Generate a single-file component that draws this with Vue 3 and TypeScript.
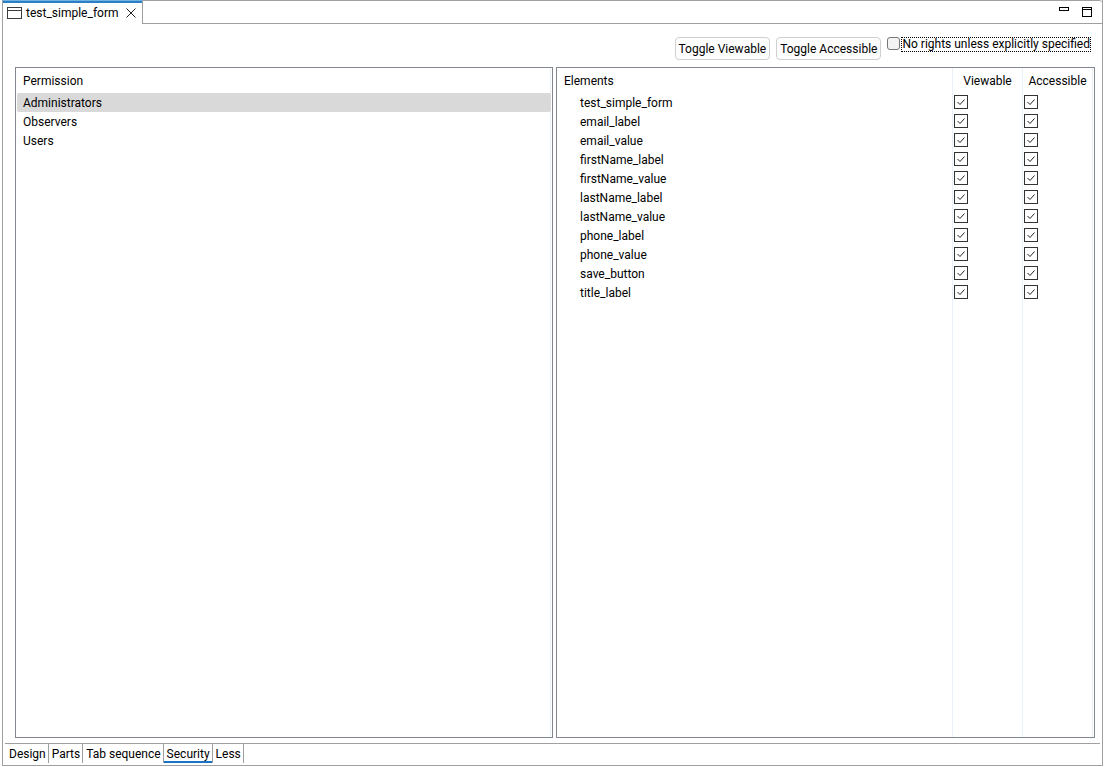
<script setup lang="ts">
import { ref } from 'vue'

interface ElementRow {
  name: string
  viewable: boolean
  accessible: boolean
}

const permissions = ['Administrators', 'Observers', 'Users']
const selected = ref('Administrators')

const elements = ref<ElementRow[]>(
  [
    'test_simple_form',
    'email_label',
    'email_value',
    'firstName_label',
    'firstName_value',
    'lastName_label',
    'lastName_value',
    'phone_label',
    'phone_value',
    'save_button',
    'title_label',
  ].map((name) => ({ name, viewable: true, accessible: true })),
)

const noRights = ref(false)

const pages = ['Design', 'Parts', 'Tab sequence', 'Security', 'Less']
const activePage = ref('Security')

function toggle(key: 'viewable' | 'accessible') {
  const next = !elements.value.every((row) => row[key])
  elements.value.forEach((row) => (row[key] = next))
}
</script>

<template>
  <main class="editor">
    <header class="tabbar">
      <div class="tab">
        <svg class="form-icon" width="15" height="12" viewBox="0 0 15 12" aria-hidden="true">
          <rect x="0.5" y="0.5" width="14" height="11" fill="#fff" stroke="#3c3c3c" />
          <path d="M1 3.5H14" stroke="#3c3c3c" />
        </svg>
        <span class="tab-title">test_simple_form</span>
        <button class="icon-button" type="button" aria-label="Close">
          <svg width="10" height="10" viewBox="0 0 10 10" aria-hidden="true">
            <path d="M0.5 0.5L9.5 9.5M9.5 0.5L0.5 9.5" stroke="#222" fill="none" />
          </svg>
        </button>
      </div>
      <div class="window-tools">
        <button class="icon-button" type="button" aria-label="Minimize">
          <svg width="10" height="10" viewBox="0 0 10 10" aria-hidden="true">
            <rect x="0.5" y="0.5" width="9" height="3" fill="#fff" stroke="#000" />
          </svg>
        </button>
        <button class="icon-button" type="button" aria-label="Maximize">
          <svg width="10" height="10" viewBox="0 0 10 10" aria-hidden="true">
            <rect x="0.5" y="0.5" width="9" height="9" fill="#fff" stroke="#000" />
            <path d="M1 2.5H9" stroke="#000" />
          </svg>
        </button>
      </div>
    </header>

    <div class="toolbar">
      <button class="push" type="button" @click="toggle('viewable')">Toggle Viewable</button>
      <button class="push" type="button" @click="toggle('accessible')">Toggle Accessible</button>
      <div class="option">
        <input id="no-rights" v-model="noRights" class="soft-check" type="checkbox" />
        <label for="no-rights">No rights unless explicitly specified</label>
      </div>
    </div>

    <div class="panels">
      <section class="panel">
        <table class="permissions">
          <thead>
            <tr><th scope="col">Permission</th></tr>
          </thead>
          <tbody>
            <tr
              v-for="name in permissions"
              :key="name"
              :class="{ selected: name === selected }"
              @click="selected = name"
            >
              <td>{{ name }}</td>
            </tr>
            <tr class="filler" aria-hidden="true"><td></td></tr>
          </tbody>
        </table>
      </section>

      <section class="panel">
        <table class="elements">
          <colgroup>
            <col />
            <col class="viewable-col" />
            <col class="accessible-col" />
          </colgroup>
          <thead>
            <tr>
              <th scope="col">Elements</th>
              <th scope="col" class="center">Viewable</th>
              <th scope="col" class="center">Accessible</th>
            </tr>
          </thead>
          <tbody>
            <tr v-for="row in elements" :key="row.name">
              <td class="name">{{ row.name }}</td>
              <td class="flag">
                <input v-model="row.viewable" class="box" type="checkbox" :aria-label="`${row.name} viewable`" />
              </td>
              <td class="flag">
                <input v-model="row.accessible" class="box" type="checkbox" :aria-label="`${row.name} accessible`" />
              </td>
            </tr>
            <tr class="filler" aria-hidden="true"><td></td><td></td><td></td></tr>
          </tbody>
        </table>
      </section>
    </div>

    <nav class="pages">
      <button
        v-for="page in pages"
        :key="page"
        type="button"
        class="page"
        :class="{ active: page === activePage }"
        @click="activePage = page"
      >
        {{ page }}
      </button>
    </nav>
  </main>
</template>

<style>
body {
  background: #fff;
}
</style>

<style scoped>
.editor {
  box-sizing: border-box;
  display: flex;
  flex-direction: column;
  min-height: calc(100vh - 1px);
  margin: 0 2px 1px;
  border: solid #a0a0a0;
  border-width: 0 1px 1px;
  font-family: Roboto, 'Open Sans', sans-serif;
  font-size: 12px;
  line-height: 16px;
  color: #000;
  background: #fff;
}

button,
input {
  font: inherit;
  color: inherit;
  margin: 0;
}

.tabbar {
  display: flex;
  height: 24px;
}

.tab {
  box-sizing: border-box;
  display: flex;
  align-items: center;
  padding: 2px 6px 2px 4px;
  border-top: 1px solid #6fb1e0;
  border-right: 1px solid #a0a0a0;
  box-shadow: inset 0 2px #2c7fc4;
}

.form-icon {
  margin-right: 4px;
}

.tab-title {
  margin-right: 7px;
}

.icon-button {
  display: flex;
  padding: 0;
  border: 0;
  background: none;
}

.window-tools {
  flex: 1;
  display: flex;
  justify-content: flex-end;
  gap: 13px;
  padding: 6px 10px 0 0;
  border: solid #a0a0a0;
  border-width: 1px 0;
  border-top-right-radius: 3px;
}

.toolbar {
  display: flex;
  justify-content: flex-end;
  align-items: flex-start;
  gap: 6px;
  padding: 13px 11px 7px;
}

.push {
  box-sizing: border-box;
  height: 23px;
  padding: 0 3px;
  border: 1px solid #d0d0d0;
  border-radius: 4px;
  background: #fdfdfd;
  white-space: nowrap;
}

.option {
  display: flex;
  align-items: flex-start;
  gap: 1px;
}

.option label {
  box-sizing: border-box;
  height: 15px;
  line-height: 12px;
  border: 1px dotted #000;
  white-space: nowrap;
}

.soft-check {
  appearance: none;
  box-sizing: border-box;
  width: 13px;
  height: 13px;
  border: 1px solid #777;
  border-radius: 3px;
  background: #f3f3f3;
}

.panels {
  flex: 1;
  display: grid;
  grid-template-columns: 538fr 539fr;
  gap: 3px;
  padding: 0 7px 5px 12px;
}

.panel {
  display: flex;
  border: 1px solid #828790;
}

table {
  width: 100%;
  table-layout: fixed;
  border-collapse: separate;
  border-spacing: 0;
}

th,
td {
  box-sizing: border-box;
  padding: 0 0 0 7px;
  text-align: left;
  font-weight: normal;
}

th {
  height: 25px;
}

td {
  height: 19px;
}

.filler td {
  height: auto;
}

.permissions {
  padding: 0 1px;
}

.permissions th,
.permissions td {
  padding-left: 6px;
  border-right: 1px solid #eaf0f7;
}

.permissions .selected td {
  background: #d9d9d9;
  border-right-color: #d9d9d9;
  border-radius: 2px;
}

.elements {
  padding-right: 1px;
}

.viewable-col {
  width: 70px;
}

.accessible-col {
  width: 71px;
}

.elements th + th,
.elements td + td {
  border-left: 1px solid #eaf0f7;
}

.elements th:last-child,
.elements td:last-child {
  border-right: 1px solid #eaf0f7;
}

.elements .center {
  padding: 0;
  text-align: center;
}

.elements .name {
  padding-left: 23px;
}

.elements .flag {
  padding: 0 0 1px 1px;
}

.box {
  display: block;
  box-sizing: border-box;
  appearance: none;
  width: 14px;
  height: 14px;
  border: 1px solid #333;
  background: #fff;
}

.box:checked {
  background: #fff url("data:image/svg+xml,%3Csvg xmlns='http://www.w3.org/2000/svg' viewBox='0 0 12 12'%3E%3Cpath d='M2.5 6L5 8.5L9.5 3.5' fill='none' stroke='%23222'/%3E%3C/svg%3E") center / 12px 12px;
}

.pages {
  box-sizing: border-box;
  display: flex;
  align-items: flex-start;
  height: 21px;
  margin: 0 2px 1px;
  padding-left: 1px;
  border-top: 1px solid #a0a0a0;
}

.page {
  box-sizing: border-box;
  height: 19px;
  padding: 0 2px 0 3px;
  border: 0;
  border-right: 1px solid #a0a0a0;
  background: #fff;
  white-space: nowrap;
}

.page.active {
  box-shadow: inset 0 -2px #1a73c4;
}
</style>
